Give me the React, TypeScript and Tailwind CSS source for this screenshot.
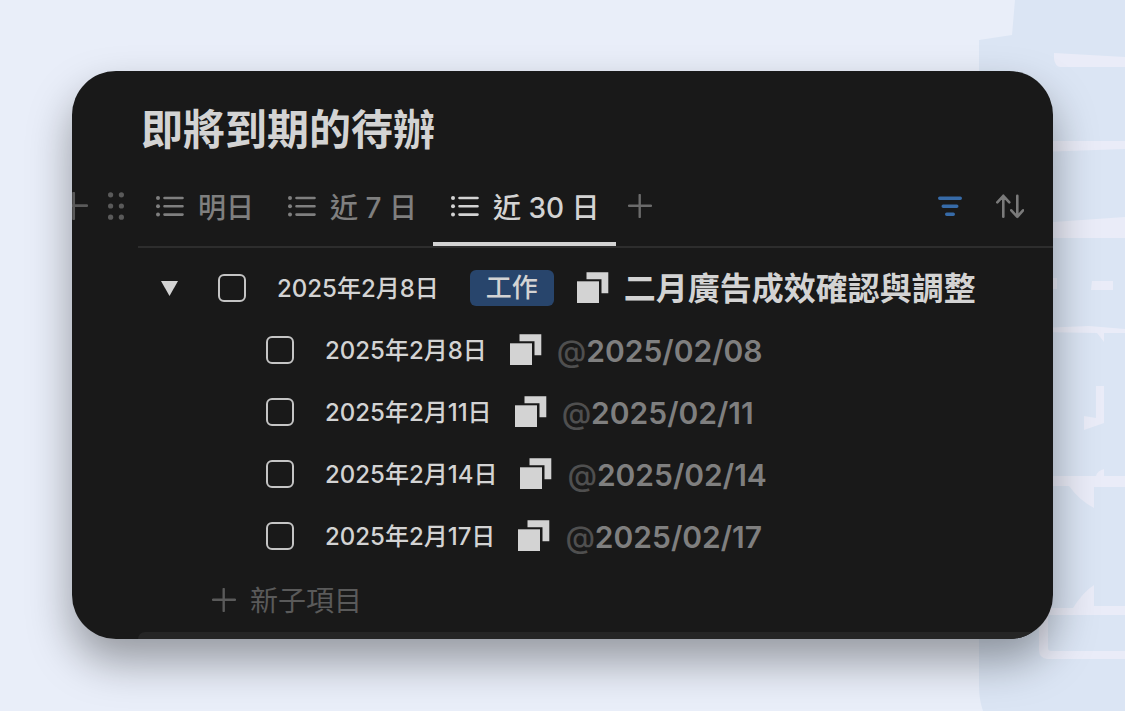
import { useState } from 'react';

type SubItem = {
  id: number;
  date: string;
  title: string;
};

const tabs = ['明日', '近 7 日', '近 30 日'];

const subItems: SubItem[] = [
  { id: 1, date: '2025年2月8日', title: '2025/02/08' },
  { id: 2, date: '2025年2月11日', title: '2025/02/11' },
  { id: 3, date: '2025年2月14日', title: '2025/02/14' },
  { id: 4, date: '2025年2月17日', title: '2025/02/17' },
];

const ListIcon = () => (
  <svg className="w-7 h-7 shrink-0" viewBox="0 0 28 28" fill="none" stroke="currentColor" strokeWidth="2.6" strokeLinecap="round">
    <path d="M8.5 6H26.5M8.5 14.3H26.5M8.5 22.6H26.5" />
    <g fill="currentColor" stroke="none">
      <circle cx="2" cy="6" r="2" />
      <circle cx="2" cy="14.3" r="2" />
      <circle cx="2" cy="22.6" r="2" />
    </g>
  </svg>
);

const PlusIcon = ({ className = 'w-6 h-6' }: { className?: string }) => (
  <svg className={`shrink-0 ${className}`} viewBox="0 0 24 24" fill="none" stroke="currentColor" strokeWidth="2.4" strokeLinecap="round">
    <path d="M11.7 1V23M1 11.7H23" />
  </svg>
);

const PagesIcon = () => (
  <svg className="w-8 h-8 shrink-0 text-[#d3d3d3]" viewBox="0 0 32 32" fill="currentColor">
    <path d="M9.5 0.3H31.3V21.3H24.5V7.3H9.5Z" />
    <path d="M0 9.3H22V31H0Z" />
  </svg>
);

const Checkbox = ({ label }: { label: string }) => (
  <input
    type="checkbox"
    aria-label={label}
    className="appearance-none w-7 h-7 shrink-0 rounded-md border-2 border-[#c4c4c4] checked:bg-[#2b6cb0]"
  />
);

const Backdrop = () => (
  <svg className="absolute right-0 top-0 h-full w-[146px]" viewBox="0 0 146 711" preserveAspectRatio="xMaxYMin slice" aria-hidden="true">
    <path d="M36 0H146V711H4Q0 700 0 685V40L33 35Z" fill="#dbe5f4" />
    <g fill="#eaecf8">
      <path d="M75 53L146 57V67H81Q76 66 75 59Z" />
      <path d="M60 141H146V149L60 152Z" />
      <path d="M60 223L146 217V238H60Z" />
      <path d="M60 278H78V289H60ZM113 281H134V290H112Z" />
      <path d="M60 328L110 326L146 329V333H125V342L118 333L60 332Z" />
      <path d="M117 386H125V423L105 430V416L117 418Z" />
      <path d="M60 476H117Q118 471 125 469V476H146V487H115V508Q100 500 90 486H60Z" />
      <path d="M60 608H94Q104 592 115 585V606H146V615H60Z" />
      <path d="M60 600H69V648Q69 651 72 651H146V659H68Q60 658 60 650Z" />
    </g>
  </svg>
);

const App = () => {
  const [activeTab, setActiveTab] = useState<number>(2);
  const [open, setOpen] = useState<boolean>(true);

  return (
    <div
      lang="zh-Hant"
      className="relative min-h-screen overflow-hidden bg-[#e9eef9] px-[72px] pt-[71px] pb-[72px] font-['Inter','Noto_Sans_CJK_TC',sans-serif]"
    >
      <Backdrop />
      <main className="relative overflow-hidden rounded-[44px] bg-[#191919] text-[#d3d3d3] shadow-[0_22px_44px_rgba(0,0,0,0.36)]">
        <h1 className="pt-7 pl-[69px] text-[42px] leading-[62px] font-bold">即將到期的待辦</h1>

        <div className="flex mt-1">
          <div className="flex w-[66px] shrink-0 items-center justify-end gap-5 pr-3.5 pb-0.5 text-[#5a5a5a]">
            <button type="button" aria-label="新增">
              <PlusIcon className="w-7 h-7" />
            </button>
            <button type="button" aria-label="拖曳">
              <svg className="w-4 h-7" viewBox="0 0 16 28" fill="currentColor">
                <circle cx="2.6" cy="2.8" r="2.6" />
                <circle cx="13.4" cy="2.8" r="2.6" />
                <circle cx="2.6" cy="14" r="2.6" />
                <circle cx="13.4" cy="14" r="2.6" />
                <circle cx="2.6" cy="25.2" r="2.6" />
                <circle cx="13.4" cy="25.2" r="2.6" />
              </svg>
            </button>
          </div>
          <div className="flex flex-1 items-stretch border-b-2 border-[#2d2d2d] pr-[29px]">
            {tabs.map((tab, i) => (
              <button
                key={tab}
                type="button"
                onClick={() => setActiveTab(i)}
                className={`flex h-[81px] items-center gap-3.5 border-b-4 pt-1 pl-[18px] pr-4 text-[28px] font-medium whitespace-nowrap ${
                  i === activeTab ? 'border-[#d3d3d3] text-[#d3d3d3]' : 'border-transparent text-[#7f7f7f]'
                }`}
              >
                <ListIcon />
                <span className="pt-1">{tab}</span>
              </button>
            ))}
            <button type="button" aria-label="新增檢視" className="px-3 text-[#6b6b6b]">
              <PlusIcon />
            </button>
            <div className="ml-auto flex items-center gap-[34px]">
              <button type="button" aria-label="篩選" className="text-[#376ba8]">
                <svg className="w-6 h-7" viewBox="0 0 24 28" fill="none" stroke="currentColor" strokeWidth="3.4" strokeLinecap="round">
                  <path d="M1.7 6.3H22.3M5.2 14.3H18.8M8.7 22.3H15.3" />
                </svg>
              </button>
              <button type="button" aria-label="排序" className="text-[#7a7a7a]">
                <svg className="w-7 h-7" viewBox="0 0 28 28" fill="none" stroke="currentColor" strokeWidth="2.6" strokeLinecap="round" strokeLinejoin="round">
                  <path d="M7.3 24.8V3.8M1.3 10.3L7.3 3.8L13.3 10.3M21.3 3.8V24.8M15.3 18.3L21.3 24.8L27 18.3" />
                </svg>
              </button>
            </div>
          </div>
        </div>

        <ul className="pt-[9px]">
          <li className="flex h-[62px] items-center pl-[89px]">
            <button type="button" aria-label="展開" onClick={() => setOpen(!open)} className="mr-10">
              <svg className="w-[17px] h-4" viewBox="0 0 17 16" fill="currentColor">
                <path d="M0 1H17L8.5 16Z" />
              </svg>
            </button>
            <Checkbox label="二月廣告成效確認與調整" />
            <span className="ml-[31px] pt-0.5 text-2xl font-medium whitespace-nowrap">2025年2月8日</span>
            <span className="ml-[31px] mr-[23px] rounded-md bg-[#28456c] px-4 text-[26px] leading-9 font-medium whitespace-nowrap">工作</span>
            <PagesIcon />
            <span className="ml-[15px] pt-0.5 text-[32px] font-semibold whitespace-nowrap">二月廣告成效確認與調整</span>
          </li>
          {open &&
            subItems.map((item) => (
              <li key={item.id} className="flex h-[62px] items-center pl-[194px]">
                <Checkbox label={item.title} />
                <span className="ml-[31px] mr-[23px] pt-0.5 text-2xl font-medium whitespace-nowrap">{item.date}</span>
                <PagesIcon />
                <span className="ml-[15px] pt-0.5 text-[30px] font-semibold whitespace-nowrap text-[#7f7f7f]">
                  <span className="font-medium text-[#4f4f4f]">@</span>
                  {item.title}
                </span>
              </li>
            ))}
        </ul>

        <button type="button" className="flex h-[65px] items-center gap-3.5 pl-[140px] text-[28px] text-[#5a5a5a]">
          <PlusIcon />
          <span className="pt-0.5">新子項目</span>
        </button>
        <div className="ml-[66px] h-[7px] rounded-tl-lg bg-[#252525]" />
      </main>
    </div>
  );
};

export default App;
